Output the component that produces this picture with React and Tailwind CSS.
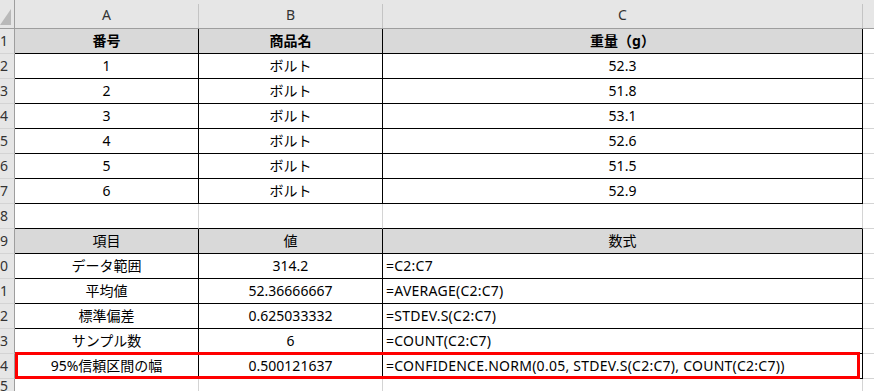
import clsx from "clsx";

const table1 = [
  ["1", "ボルト", "52.3"],
  ["2", "ボルト", "51.8"],
  ["3", "ボルト", "53.1"],
  ["4", "ボルト", "52.6"],
  ["5", "ボルト", "51.5"],
  ["6", "ボルト", "52.9"],
];

const table2 = [
  ["データ範囲", "314.2", "=C2:C7"],
  ["平均値", "52.36666667", "=AVERAGE(C2:C7)"],
  ["標準偏差", "0.625033332", "=STDEV.S(C2:C7)"],
  ["サンプル数", "6", "=COUNT(C2:C7)"],
  ["95%信頼区間の幅", "0.500121637", "=CONFIDENCE.NORM(0.05, STDEV.S(C2:C7), COUNT(C2:C7))"],
];

function RowHead({ n, short }) {
  return (
    <div
      className={clsx(
        "flex justify-end overflow-hidden bg-[#e6e6e6] border-r border-r-[#9e9e9e] pr-[6px] text-[#333]",
        short ? "h-[12px] items-start" : "h-[25px] items-center border-b border-b-[#d4d4d4]"
      )}
    >
      {n}
    </div>
  );
}

function Cell({ children, head, bold, left, right = "black" }) {
  return (
    <div
      className={clsx(
        "flex h-[25px] items-center overflow-hidden whitespace-nowrap border-b border-r border-b-black",
        head ? "bg-[#d9d9d9]" : "bg-white",
        right === "black" ? "border-r-black" : "border-r-[#d4d4d4]",
        left ? "justify-start pl-[3px] tracking-[0.25px]" : "justify-center",
        bold && "font-bold"
      )}
    >
      {children}
    </div>
  );
}

function Blank() {
  return <div className="h-[25px] bg-white border-b border-b-[#d4d4d4]" />;
}

function ColHead({ label, last }) {
  return (
    <div className="flex h-[29px] flex-col bg-[#e6e6e6] border-b border-b-[#9e9e9e] pt-[4px]">
      <div
        className={clsx(
          "flex flex-1 items-center justify-center pb-[3px] text-[#333]",
          !last && "border-r border-r-[#c4c4c4]"
        )}
      >
        {label}
      </div>
    </div>
  );
}

export default function App() {
  return (
    <div className="relative h-[391px] w-[874px] overflow-hidden bg-white font-['Noto_Sans','Noto_Sans_CJK_JP',sans-serif] text-[14px] leading-none text-black">
      <div className="grid grid-cols-[15px_184px_184px_480px_11px]">
        {/* column headers */}
        <div className="relative h-[29px] bg-[#e6e6e6] border-r border-r-[#9e9e9e] border-b border-b-[#9e9e9e]">
          <svg className="absolute left-0 top-0" width="14" height="28" viewBox="0 0 14 28">
            <polygon points="0,25 11,25 11,9" fill="#b9b9b9" />
          </svg>
        </div>
        <ColHead label="A" />
        <ColHead label="B" />
        <ColHead label="C" />
        <ColHead label="" last />

        {/* row 1 */}
        <RowHead n="1" />
        <Cell head bold>番号</Cell>
        <Cell head bold>商品名</Cell>
        <Cell head bold>重量（g）</Cell>
        <Blank />

        {table1.map((r, i) => (
          <div key={r[0]} className="contents">
            <RowHead n={String(i + 2)} />
            <Cell>{r[0]}</Cell>
            <Cell>{r[1]}</Cell>
            <Cell>{r[2]}</Cell>
            <Blank />
          </div>
        ))}

        {/* row 8 */}
        <RowHead n="8" />
        <Cell right="grid"></Cell>
        <Cell right="grid"></Cell>
        <Cell right="grid"></Cell>
        <Blank />

        {/* row 9 */}
        <RowHead n="9" />
        <Cell head>項目</Cell>
        <Cell head>値</Cell>
        <Cell head>数式</Cell>
        <Blank />

        {table2.map((r, i) => (
          <div key={r[0]} className="contents">
            <RowHead n={String(i + 10)} />
            <Cell>{r[0]}</Cell>
            <Cell>{r[1]}</Cell>
            <Cell left>{r[2]}</Cell>
            <Blank />
          </div>
        ))}

        {/* row 15 */}
        <RowHead n="15" short />
        <div className="h-[12px] border-r border-r-[#d4d4d4]" />
        <div className="h-[12px] border-r border-r-[#d4d4d4]" />
        <div className="h-[12px] border-r border-r-[#d4d4d4]" />
        <div className="h-[12px]" />
      </div>

      {/* highlight */}
      <div className="pointer-events-none absolute left-[15px] top-[352px] h-[27px] w-[845px] border-[3px] border-[#ff0000]" />
    </div>
  );
}
